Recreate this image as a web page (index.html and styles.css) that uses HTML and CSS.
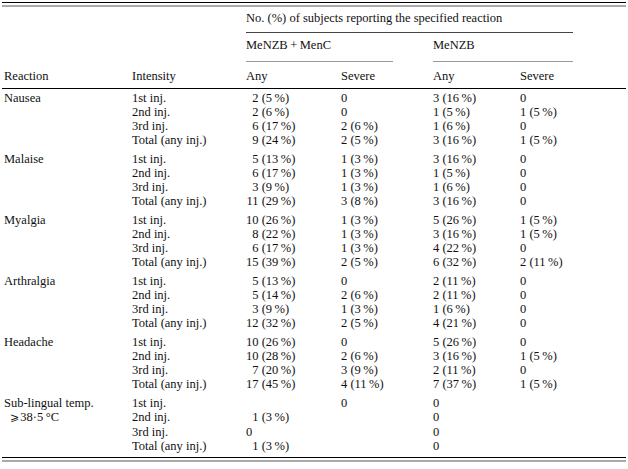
FILE: index.html
```html
<!DOCTYPE html>
<html>
<head>
<meta charset="utf-8">
<link rel="stylesheet" href="styles.css">
</head>
<body>
<div class="frame">
<div class="inner">
<table class="tbl">
<colgroup>
<col class="c1"><col class="c2"><col class="c3"><col class="c4"><col class="c5"><col class="c6">
</colgroup>
<thead>
<tr class="ha">
<th></th><th></th>
<th colspan="4"><div class="span-a">No. (%) of subjects reporting the specified reaction</div></th>
</tr>
<tr class="hb">
<th></th><th></th>
<th colspan="2"><div class="span-b">MeNZB&#8201;+&#8201;MenC</div></th>
<th colspan="2"><div class="span-c">MeNZB</div></th>
</tr>
<tr class="hc">
<th class="first">Reaction</th><th>Intensity</th><th>Any</th><th>Severe</th><th>Any</th><th>Severe</th>
</tr>
</thead>
<tbody>
<tr class="g"><td class="first">Nausea</td><td>1st inj.</td><td><span class="n">2</span> (5&#8201;%)</td><td>0</td><td>3 (16&#8201;%)</td><td>0</td></tr>
<tr><td class="first"></td><td>2nd inj.</td><td><span class="n">2</span> (6&#8201;%)</td><td>0</td><td>1 (5&#8201;%)</td><td>1 (5&#8201;%)</td></tr>
<tr><td class="first"></td><td>3rd inj.</td><td><span class="n">6</span> (17&#8201;%)</td><td>2 (6&#8201;%)</td><td>1 (6&#8201;%)</td><td>0</td></tr>
<tr><td class="first"></td><td>Total (any inj.)</td><td><span class="n">9</span> (24&#8201;%)</td><td>2 (5&#8201;%)</td><td>3 (16&#8201;%)</td><td>1 (5&#8201;%)</td></tr>

<tr class="g"><td class="first">Malaise</td><td>1st inj.</td><td><span class="n">5</span> (13&#8201;%)</td><td>1 (3&#8201;%)</td><td>3 (16&#8201;%)</td><td>0</td></tr>
<tr><td class="first"></td><td>2nd inj.</td><td><span class="n">6</span> (17&#8201;%)</td><td>1 (3&#8201;%)</td><td>1 (5&#8201;%)</td><td>0</td></tr>
<tr><td class="first"></td><td>3rd inj.</td><td><span class="n">3</span> (9&#8201;%)</td><td>1 (3&#8201;%)</td><td>1 (6&#8201;%)</td><td>0</td></tr>
<tr><td class="first"></td><td>Total (any inj.)</td><td><span class="n">11</span> (29&#8201;%)</td><td>3 (8&#8201;%)</td><td>3 (16&#8201;%)</td><td>0</td></tr>

<tr class="g"><td class="first">Myalgia</td><td>1st inj.</td><td><span class="n">10</span> (26&#8201;%)</td><td>1 (3&#8201;%)</td><td>5 (26&#8201;%)</td><td>1 (5&#8201;%)</td></tr>
<tr><td class="first"></td><td>2nd inj.</td><td><span class="n">8</span> (22&#8201;%)</td><td>1 (3&#8201;%)</td><td>3 (16&#8201;%)</td><td>1 (5&#8201;%)</td></tr>
<tr><td class="first"></td><td>3rd inj.</td><td><span class="n">6</span> (17&#8201;%)</td><td>1 (3&#8201;%)</td><td>4 (22&#8201;%)</td><td>0</td></tr>
<tr><td class="first"></td><td>Total (any inj.)</td><td><span class="n">15</span> (39&#8201;%)</td><td>2 (5&#8201;%)</td><td>6 (32&#8201;%)</td><td>2 (11&#8201;%)</td></tr>

<tr class="g"><td class="first">Arthralgia</td><td>1st inj.</td><td><span class="n">5</span> (13&#8201;%)</td><td>0</td><td>2 (11&#8201;%)</td><td>0</td></tr>
<tr><td class="first"></td><td>2nd inj.</td><td><span class="n">5</span> (14&#8201;%)</td><td>2 (6&#8201;%)</td><td>2 (11&#8201;%)</td><td>0</td></tr>
<tr><td class="first"></td><td>3rd inj.</td><td><span class="n">3</span> (9&#8201;%)</td><td>1 (3&#8201;%)</td><td>1 (6&#8201;%)</td><td>0</td></tr>
<tr><td class="first"></td><td>Total (any inj.)</td><td><span class="n">12</span> (32&#8201;%)</td><td>2 (5&#8201;%)</td><td>4 (21&#8201;%)</td><td>0</td></tr>

<tr class="g"><td class="first">Headache</td><td>1st inj.</td><td><span class="n">10</span> (26&#8201;%)</td><td>0</td><td>5 (26&#8201;%)</td><td>0</td></tr>
<tr><td class="first"></td><td>2nd inj.</td><td><span class="n">10</span> (28&#8201;%)</td><td>2 (6&#8201;%)</td><td>3 (16&#8201;%)</td><td>1 (5&#8201;%)</td></tr>
<tr><td class="first"></td><td>3rd inj.</td><td><span class="n">7</span> (20&#8201;%)</td><td>3 (9&#8201;%)</td><td>2 (11&#8201;%)</td><td>0</td></tr>
<tr><td class="first"></td><td>Total (any inj.)</td><td><span class="n">17</span> (45&#8201;%)</td><td>4 (11&#8201;%)</td><td>7 (37&#8201;%)</td><td>1 (5&#8201;%)</td></tr>

<tr class="g"><td class="first">Sub-lingual temp.</td><td>1st inj.</td><td></td><td>0</td><td>0</td><td></td></tr>
<tr><td class="first"><span class="ind"><span class="geq">&#10878;</span>38&#183;5&#8201;&#176;C</span></td><td>2nd inj.</td><td><span class="n">1</span> (3&#8201;%)</td><td></td><td>0</td><td></td></tr>
<tr><td class="first"></td><td>3rd inj.</td><td>0</td><td></td><td>0</td><td></td></tr>
<tr class="last"><td class="first"></td><td>Total (any inj.)</td><td><span class="n">1</span> (3&#8201;%)</td><td></td><td>0</td><td></td></tr>
</tbody>
</table>
</div>
</div>
</body>
</html>
```

FILE: styles.css
```css
html, body {
  margin: 0;
  padding: 0;
  background: #fff;
}
body {
  font-family: "Liberation Serif", "Times New Roman", serif;
  font-size: 12.5px;
  color: #111;
}
.frame {
  margin: 2px 2px 0 2px;
  border-top: 1px solid #000;
  padding-top: 2px;
}
.inner {
  border-top: 2px solid #aaa;
}
.tbl {
  width: 624px;
  border-collapse: collapse;
  table-layout: fixed;
  line-height: 14px;
  border-bottom: 1px solid #000;
}
.c1 { width: 130px; }
.c2 { width: 114px; }
.c3 { width: 95px; }
.c4 { width: 92px; }
.c5 { width: 87px; }
.c6 { width: 106px; }
th, td {
  padding: 0;
  text-align: left;
  font-weight: normal;
  white-space: nowrap;
  vertical-align: top;
}
.first { padding-left: 2px; }
.ha th { padding-top: 4px; }
.span-a {
  margin-right: 53px;
  padding-bottom: 7px;
  border-bottom: 1px solid #444;
}
.hb th { padding-top: 5px; }
.span-b {
  margin-right: 40px;
  padding-bottom: 9px;
  border-bottom: 1px solid #999;
}
.span-c {
  margin-right: 53px;
  padding-bottom: 9px;
  border-bottom: 1px solid #999;
}
.hc th {
  padding-top: 7px;
  padding-bottom: 5px;
  border-bottom: 1px solid #000;
}
tbody tr.g td { padding-top: 5px; }
tbody tr:first-child td { padding-top: 2px; }
tbody tr.last td { padding-bottom: 4px; }
.n {
  display: inline-block;
  width: 1em;
  text-align: right;
}
.ind { padding-left: 6px; }
.geq {
  font-family: "DejaVu Serif", "DejaVu Sans", serif;
  font-size: 11px;
  margin-right: 1px;
}
.inner::after {
  content: "";
  display: block;
  border-top: 2px solid #aaa;
  margin-top: 2px;
}
```
